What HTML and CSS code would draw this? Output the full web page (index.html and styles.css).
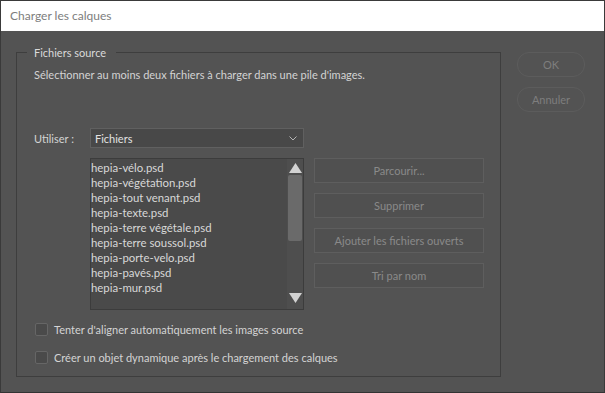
FILE: index.html
```html
<!DOCTYPE html>
<html lang="fr">
<head>
<meta charset="utf-8">
<title>Charger les calques</title>
<link rel="stylesheet" href="styles.css">
</head>
<body>
<div class="window">
  <div class="titlebar">Charger les calques</div>
  <div class="content">
    <fieldset class="group">
      <legend class="legend">Fichiers source</legend>
      <p class="desc">Sélectionner au moins deux fichiers à charger dans une pile d'images.</p>
      <div class="use-row">
        <span class="use-label">Utiliser :</span>
        <div class="select">
          <span>Fichiers</span>
          <svg class="chev" width="8" height="5" viewBox="0 0 8 5"><path d="M0.5 0.5 L4 4 L7.5 0.5" fill="none" stroke="#b4b4b4" stroke-width="1"/></svg>
        </div>
      </div>
      <div class="files-row">
        <div class="list">
          <ul class="items">
            <li>hepia-vélo.psd</li>
            <li>hepia-végétation.psd</li>
            <li>hepia-tout venant.psd</li>
            <li>hepia-texte.psd</li>
            <li>hepia-terre végétale.psd</li>
            <li>hepia-terre soussol.psd</li>
            <li>hepia-porte-velo.psd</li>
            <li>hepia-pavés.psd</li>
            <li>hepia-mur.psd</li>
          </ul>
          <div class="scrollbar">
            <svg class="arrow" width="13" height="10" viewBox="0 0 13 10"><path d="M6.5 0 L13 10 L0 10 Z" fill="#d2d2d2"/></svg>
            <div class="track"><div class="thumb"></div></div>
            <svg class="arrow" width="13" height="10" viewBox="0 0 13 10"><path d="M0 0 L13 0 L6.5 10 Z" fill="#d2d2d2"/></svg>
          </div>
        </div>
        <div class="side-buttons">
          <div class="btn">Parcourir...</div>
          <div class="btn">Supprimer</div>
          <div class="btn">Ajouter les fichiers ouverts</div>
          <div class="btn">Tri par nom</div>
        </div>
      </div>
      <div class="checks">
        <label class="check"><span class="box"></span>Tenter d'aligner automatiquement les images source</label>
        <label class="check"><span class="box"></span>Créer un objet dynamique après le chargement des calques</label>
      </div>
    </fieldset>
    <div class="dialog-buttons">
      <div class="pill">OK</div>
      <div class="pill">Annuler</div>
    </div>
  </div>
</div>
</body>
</html>
```
FILE: styles.css
```css
* { box-sizing: border-box; }
html, body {
  margin: 0;
  padding: 0;
  background: #2e2e2e;
}
body {
  width: 605px;
  height: 393px;
  overflow: hidden;
  font-family: Lato, "Liberation Sans", Arial, sans-serif;
  font-size: 11px;
  color: #d4d4d4;
}
.window {
  width: 605px;
  height: 393px;
  border: 1px solid #3a3a3a;
  border-bottom: 1px solid #333;
  background: #535353;
  display: flex;
  flex-direction: column;
}
.titlebar {
  height: 30px;
  background: #ffffff;
  color: #7d7d7d;
  font-size: 12px;
  line-height: 30px;
  padding-left: 9px;
  flex: none;
}
.content {
  flex: 1;
  display: flex;
  align-items: flex-start;
  padding-left: 15px;
}
.group {
  margin: 13px 0 0 0;
  padding: 0 0 11px 17px;
  width: 485px;
  height: 333px;
  border: 1px solid #3e3e3e;
  min-width: 0;
}
.legend {
  margin-left: -7px;
  padding: 0 10px 0 7px;
  line-height: 16px;
  height: 16px;
  color: #dadada;
  position: relative;
  top: 1px;
}
.desc {
  margin: 7px 0 0 0;
  line-height: 16px;
}
.use-row {
  display: flex;
  align-items: center;
  margin-top: 45px;
}
.use-label {
  width: 56px;
  flex: none;
}
.select {
  width: 214px;
  height: 20px;
  background: #484848;
  border: 1px solid #606060;
  display: flex;
  align-items: center;
  justify-content: space-between;
  padding: 0 6px 0 4px;
  color: #e2e2e2;
}
.chev { display: block; }
.files-row {
  display: flex;
  margin-top: 10px;
  margin-left: 56px;
}
.list {
  width: 214px;
  height: 152px;
  border: 1px solid #3c3c3c;
  background: #4a4a4a;
  display: flex;
}
.items {
  list-style: none;
  margin: 0;
  padding: 1px 0 0 0;
  flex: 1;
  font-size: 11.4px;
}
.items li {
  line-height: 15px;
  height: 15px;
  color: #d8d8d8;
}
.scrollbar {
  width: 16px;
  flex: none;
  background: #4e4e4e;
  display: flex;
  flex-direction: column;
  align-items: center;
  padding: 4px 0 6px 0;
}
.arrow { display: block; flex: none; }
.track {
  flex: 1;
  width: 100%;
  padding: 2px 1px;
}
.thumb {
  height: 66px;
  background: #6a6a6a;
  border-radius: 2px;
}
.side-buttons {
  display: flex;
  flex-direction: column;
  gap: 10px;
  margin-left: 10px;
}
.btn {
  width: 170px;
  height: 25px;
  border: 1px solid #5e5e5e;
  background: #505050;
  color: #8a8a8a;
  display: flex;
  align-items: center;
  justify-content: center;
}
.checks {
  margin-top: 11px;
  display: flex;
  flex-direction: column;
  gap: 12px;
}
.check {
  display: flex;
  align-items: center;
  height: 16px;
}
.box {
  width: 13px;
  height: 13px;
  border: 1px solid #666;
  background: #4a4a4a;
  border-radius: 2px;
  margin: 0 6px 0 1px;
  flex: none;
}
.dialog-buttons {
  display: flex;
  flex-direction: column;
  gap: 10px;
  margin: 21px 0 0 16px;
}
.pill {
  width: 68px;
  height: 25px;
  border: 1px solid #5c5c5c;
  border-radius: 12px;
  color: #7e7e7e;
  display: flex;
  align-items: center;
  justify-content: center;
}
```
